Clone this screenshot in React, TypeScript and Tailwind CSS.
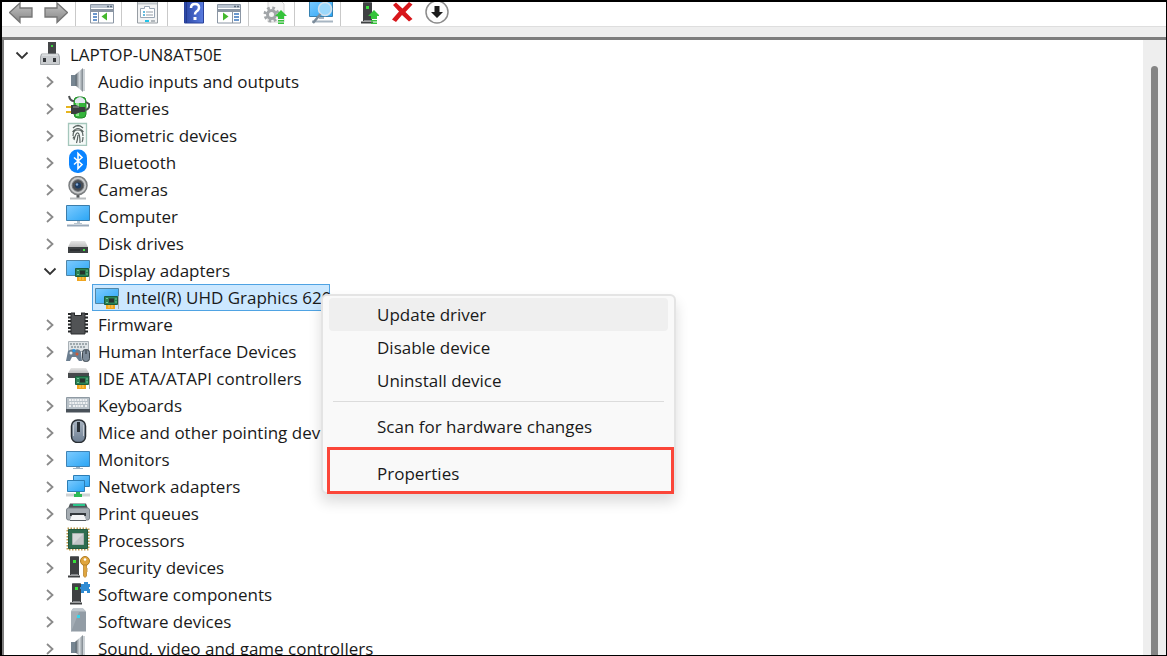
import { useState } from 'react';
import type { ReactNode } from 'react';

function Icon({ children }: { children: ReactNode }) {
  return (
    <svg width="24" height="24" viewBox="0 0 24 24" fill="none" className="shrink-0 self-start" aria-hidden="true">
      {children}
    </svg>
  );
}

function Defs() {
  return (
    <svg width="0" height="0" className="absolute" aria-hidden="true">
      <defs>
        <linearGradient id="screen" x1="0" y1="0" x2="1" y2="1">
          <stop offset="0" stopColor="#7dcbff" />
          <stop offset="1" stopColor="#2aa5f5" />
        </linearGradient>
        <linearGradient id="metal" x1="0" y1="0" x2="1" y2="0">
          <stop offset="0" stopColor="#6f777e" />
          <stop offset="0.5" stopColor="#d3d9dd" />
          <stop offset="1" stopColor="#7d858c" />
        </linearGradient>
        <linearGradient id="arrow" x1="0" y1="0" x2="0" y2="1">
          <stop offset="0" stopColor="#c4c4c4" />
          <stop offset="1" stopColor="#858585" />
        </linearGradient>
        <linearGradient id="mouse" x1="0" y1="0" x2="0" y2="1">
          <stop offset="0" stopColor="#a9b4c1" />
          <stop offset="1" stopColor="#6e7f93" />
        </linearGradient>
        <linearGradient id="help" x1="0" y1="0" x2="1" y2="0">
          <stop offset="0" stopColor="#2b46a5" />
          <stop offset="1" stopColor="#5a7de0" />
        </linearGradient>
        <linearGradient id="disk" x1="0" y1="0" x2="0" y2="1">
          <stop offset="0" stopColor="#e6e6e6" />
          <stop offset="1" stopColor="#bdbdbd" />
        </linearGradient>
      </defs>
    </svg>
  );
}

function Card() {
  return (
    <>
      <path d="M23.5 11v13" stroke="#a9adb0" />
      <path d="M9.5 11.5h13v8h-13z" fill="#2c8155" stroke="#1c5e3c" />
      <path d="M14 13.5h5v4h-5z" fill="#27332d" />
      <path d="M11 13.5h2M11 17.5h2M20 14h2M20 17h2" stroke="#6fc596" />
      <path d="M11 20h9v4h-9z" fill="#f0a51e" />
      <path d="M14 20v3M17 20v3" stroke="#fbd36f" />
    </>
  );
}

function Tower({ x = 0 }: { x?: number }) {
  return (
    <g transform={`translate(${x} 0)`}>
      <path d="M4 3l1-1h7l1 1v18H4z" fill="#3f4143" />
      <path d="M4 3l1-1h7l1 1z" fill="#6a6d70" />
      <path d="M2 22.500h12" stroke="#3f4143" strokeWidth="2" />
      <path d="M5 20.500h7" stroke="#85888b" />
      <path d="M7 6h3v3H7z" fill="#37e23b" />
    </g>
  );
}

const icons: Record<string, ReactNode> = {
  laptop: (
    <>
      <path d="M10 1h8v12h-8z" fill="#444648" />
      <path d="M13 4h2v2h-2z" fill="#3bd43f" />
      <path d="M3.500 13h17l1 3v7.500h-19V16z" fill="#c9cccf" stroke="#a3a7aa" />
      <path d="M5 17h3v4H5zM15 17h3v4h-3z" fill="#35383b" />
      <path d="M4 14h16" stroke="#eceeef" />
    </>
  ),
  speaker: (
    <>
      <path d="M5 7h5v11H5z" fill="#768591" />
      <path d="M10 6l7-6v24l-7-6z" fill="url(#metal)" />
      <path d="M10 6v12" stroke="#5e6a73" />
      <path d="M18 1v22" stroke="#9ba6ae" />
    </>
  ),
  battery: (
    <>
      <rect x="8" y="2" width="12" height="21" rx="4" fill="#35b53c" stroke="#238929" />
      <path d="M9 5q5-6 10 0v3H9z" fill="#e4e6f2" />
      <path d="M10 8h3v13h-3z" fill="#8ee58d" />
      <path d="M3 1q1 5 5 5M19 15q5-1 4-6l-3-2" stroke="#4b4f50" strokeWidth="2" />
      <path d="M0 12h6M0 17h6" stroke="#e6b520" strokeWidth="2" />
      <path d="M5 10h5l4 2h5v5h-4l-5 2H5z" fill="#393d3e" />
      <path d="M7 12h6" stroke="#959b9b" />
    </>
  ),
  fingerprint: (
    <>
      <path d="M2.500 1.500h18v22h-18z" fill="#f5faf8" stroke="#a5c7bc" strokeWidth="1.300" />
      <path d="M7 6q5-5 10 0M6.500 10q5.500-7 11 0M7 14q0-6 5-6t5 6M8 18q2-8 4-7t2 10M10.500 21q1-3 1.500-8M7 16.500l1-2M16 20q1-2 1-5M10 4h4" stroke="#57615f" strokeWidth="1.200" />
    </>
  ),
  bluetooth: (
    <>
      <rect x="3" y="0.500" width="18" height="23.500" rx="8.500" fill="#0a84ff" />
      <path d="M8 8.500l8 7-4 4V4.500l4 4-8 7" stroke="#fff" strokeWidth="1.600" />
    </>
  ),
  camera: (
    <>
      <path d="M10.500 17h3v5h-3z" fill="#55585a" />
      <path d="M4 22.500h16" stroke="#b9bcbe" strokeWidth="2" />
      <circle cx="12" cy="9.500" r="9" fill="#c8cacb" stroke="#7c7f81" strokeWidth="1.500" />
      <circle cx="12" cy="9.500" r="5.800" fill="#4a4e53" stroke="#6d7175" />
      <circle cx="12" cy="9.500" r="3" fill="#1d3c62" />
      <circle cx="11" cy="8.500" r="1.200" fill="#86acd8" />
    </>
  ),
  computer: (
    <>
      <path d="M0.500 2.500h23v15h-23z" fill="url(#screen)" stroke="#3b7dab" />
      <path d="M11 18h3v2h2v1H8v-1h3z" fill="#b8c5cf" />
      <path d="M1 22.500h22" stroke="#9aaabb" strokeWidth="2" />
    </>
  ),
  disk: (
    <>
      <path d="M5 11h14l3 6H2z" fill="url(#disk)" />
      <path d="M2 17h20v6H2z" fill="#3d4042" />
      <path d="M4 20h10" stroke="#1d1f20" />
      <path d="M17 19h2v2h-2z" fill="#42e044" />
    </>
  ),
  display: (
    <>
      <path d="M0.500 3.500h23v15h-23z" fill="url(#screen)" stroke="#5086a8" />
      <Card />
    </>
  ),
  firmware: (
    <>
      <path d="M5 2h14v21H5z" fill="#515355" stroke="#2d2f30" />
      <path d="M9 1h6v3H9z" fill="#fff" />
      <path d="M8.500 2v2.500h7V2" stroke="#252728" />
      <path d="M3.500 2v21M20.500 2v21" stroke="#252728" strokeWidth="3" strokeDasharray="2 1.500" />
    </>
  ),
  hid: (
    <>
      <path d="M2.500 3.500h20v10h-20z" fill="#dfe4e7" stroke="#a8b0b6" />
      <path d="M4 6h17M5 9h15" stroke="#8b959c" strokeWidth="1.500" strokeDasharray="2 1" />
      <path d="M2 13q4-3 7-1 4-2 6 2l1 9h-3l-3-4H6l-2 4H0z" fill="#6b7e90" />
      <circle cx="5" cy="15" r="1.500" fill="#e9edf0" />
      <circle cx="8" cy="12.500" r="1.500" fill="#2196e8" />
      <circle cx="11" cy="16" r="1.500" fill="#d05a38" />
      <rect x="16.500" y="11.500" width="7" height="12" rx="3" fill="#7d8b99" stroke="#3f4850" />
      <path d="M20 12v4" stroke="#2b3238" />
    </>
  ),
  ide: (
    <>
      <path d="M5 3h15l3 5H2z" fill="url(#disk)" />
      <path d="M2 8h21v5H2z" fill="#46494b" />
      <Card />
    </>
  ),
  keyboard: (
    <>
      <path d="M0.500 5.500h23v12h-23z" fill="#b8c1c8" stroke="#8f9aa3" />
      <path d="M3 8h18M3.500 11h18M3 14h2M7 14h10M19 14h2" stroke="#fff" strokeWidth="1.500" strokeDasharray="2 0.700" />
      <path d="M0 17h24v3.500H0z" fill="#495159" />
    </>
  ),
  mouse: (
    <>
      <rect x="5.500" y="1" width="14" height="22.500" rx="6" fill="url(#mouse)" stroke="#292e33" strokeWidth="1.500" />
      <path d="M7.500 6v11M17.500 6v11" stroke="#c5ccd4" />
      <path d="M12.500 3v10" stroke="#2a3036" strokeWidth="3" />
    </>
  ),
  monitor: (
    <>
      <path d="M0.500 5.500h23v15h-23z" fill="url(#screen)" stroke="#3f83b5" />
      <path d="M10 21h4v1h3v1H7v-1h3z" fill="#9fb2c1" />
    </>
  ),
  network: (
    <>
      <path d="M7.500 2.500h16v11h-16z" fill="url(#screen)" stroke="#2b7db5" />
      <path d="M1.500 7.500h17v11h-17z" fill="url(#screen)" stroke="#2b7db5" />
      <path d="M0 22h24" stroke="#cfd3d5" strokeWidth="3" />
      <path d="M10 19h4v2h2v3H8v-3h2z" fill="#2fba55" />
    </>
  ),
  printer: (
    <>
      <path d="M4 3.500h16l2 5H2z" fill="#4d5558" />
      <path d="M7 5h12" stroke="#2ac48a" strokeWidth="2" />
      <rect x="0.500" y="8" width="23" height="12" rx="2" fill="#a5acb2" stroke="#7c848a" />
      <path d="M4 13h16v3H4z" fill="#33383c" />
      <path d="M6 15h12l2 5H4z" fill="#f3f4f5" />
      <path d="M4 20.500h16" stroke="#565c61" />
    </>
  ),
  processor: (
    <>
      <path d="M1.500 1.500h21v21h-21z" stroke="#bd9a4c" strokeWidth="2" strokeDasharray="1.500 1.500" />
      <path d="M2.500 2.500h19v19h-19z" fill="#2f6d50" stroke="#235940" />
      <path d="M6.500 6.500h11v11h-11z" fill="#d6d8d9" stroke="#a9b2ae" />
      <path d="M7 17L17 7v10z" fill="#c2c5c7" />
    </>
  ),
  security: (
    <>
      <Tower />
      <circle cx="19" cy="7" r="4.500" fill="#e0a63f" stroke="#b27d22" />
      <circle cx="19" cy="5.500" r="1.300" fill="#fff" />
      <path d="M17.500 11h3v3l1 1-1 1 1 1-1 1v4l-1.500 1.500-1.500-1.500z" fill="#e0a63f" stroke="#b27d22" strokeWidth="0.700" />
    </>
  ),
  component: (
    <>
      <Tower x={2} />
      <path d="M15 3h3V1h4v2h2v3h-1v2h1v4h-3v-2h-3v2h-3V8h-1V6h1z" fill="#2f8bd3" />
    </>
  ),
  softdevice: (
    <>
      <path d="M7 0.500h10l3 3v20H5v-20z" fill="#929ca5" />
      <path d="M7 0.500h10l3 3H5z" fill="#c0c7cd" />
      <path d="M5 24V4h8z" fill="#a4adb5" />
      <path d="M11 7h3v3h-3z" fill="#35d5ec" />
    </>
  ),
};

const upArrow = <path d="M18 10l6 6h-3v3h-6v-3h-3zM15 20h6v1.500h-6zM15 22.500h6V24h-6z" fill="#35c33b" />;

const windowFrame = (
  <>
    <path d="M0.500 4.500h23v18.500h-23z" fill="#fff" stroke="#8b96a4" />
    <path d="M1 5h22v3H1z" fill="#b9c3d0" />
    <path d="M17 6.500h2M20 6.500h2" stroke="#5c6b7c" strokeWidth="1.500" />
    <path d="M1 10.500h22" stroke="#8b96a4" strokeWidth="3" />
  </>
);

const toolbarGroups: { label: string; art: ReactNode }[][] = [
  [
    { label: 'Back', art: <path d="M0.500 12.500L11 3v5h12v9H11v5.500z" fill="url(#arrow)" stroke="#757575" strokeWidth="1.300" /> },
    { label: 'Forward', art: <path d="M23.500 12.500L13 3v5H1v9h12v5.500z" fill="url(#arrow)" stroke="#757575" strokeWidth="1.300" /> },
  ],
  [
    {
      label: 'Show/Hide Console Tree',
      art: (
        <>
          {windowFrame}
          <path d="M8.500 12v11" stroke="#8b96a4" />
          <path d="M3 14h4M3 17h4M3 20h4" stroke="#3a76bd" strokeWidth="1.500" />
          <path d="M17 12.500v8L11.500 16.500z" fill="#43b82d" />
        </>
      ),
    },
  ],
  [
    {
      label: 'Properties',
      art: (
        <>
          <path d="M1.500 0.500h20v22.500h-20z" fill="#f2f3f4" stroke="#979da3" />
          <path d="M4.500 8.500h4v-2h5v2h5v9h-14z" fill="#fff" stroke="#9aa7b5" />
          <path d="M2 3.500h19" stroke="#c1c6cb" strokeWidth="2" />
          <path d="M7 12h2M7 15h2" stroke="#35a5d5" strokeWidth="1.500" />
          <path d="M10 12h7M10 15h7" stroke="#929ba5" />
          <path d="M9 20h4v2H9z" fill="#21c4e9" />
          <path d="M15 20h4v2h-4z" fill="#b2b8bd" />
        </>
      ),
    },
  ],
  [
    {
      label: 'Help',
      art: (
        <>
          <path d="M2.500 0.500h19v22.500h-19z" fill="url(#help)" stroke="#2a429b" />
          <path d="M4.500 1v22" stroke="#233a90" />
          <path d="M9 8q0-4 4-4t4 3.500q0 2.500-2.500 4-1.500 1-1.500 3" stroke="#fff" strokeWidth="2.500" />
          <path d="M11.500 17h3v3h-3z" fill="#fff" />
        </>
      ),
    },
    {
      label: 'Show/Hide Action Pane',
      art: (
        <>
          {windowFrame}
          <path d="M15.500 12v11" stroke="#8b96a4" />
          <path d="M17 14h5M17 17h5M17 20h5" stroke="#3a76bd" strokeWidth="1.500" />
          <path d="M6 12.500v8l5.500-4z" fill="#43b82d" />
        </>
      ),
    },
  ],
  [
    {
      label: 'Update device drivers',
      art: (
        <>
          <path d="M5 0h12l4 4v18H5z" fill="#f5f5f5" stroke="#d2d2d2" />
          <circle cx="8.500" cy="14.500" r="6.500" stroke="#a1a5a8" strokeWidth="3" strokeDasharray="2.600 2.500" />
          <circle cx="8.500" cy="14.500" r="4" fill="#f5f5f5" stroke="#a1a5a8" strokeWidth="3" />
          {upArrow}
        </>
      ),
    },
  ],
  [
    {
      label: 'Scan for hardware changes',
      art: (
        <>
          <path d="M0.500 0.500h23v16h-23z" fill="url(#screen)" stroke="#3681b1" />
          <path d="M10 18h5M3 21.500h21" stroke="#a7b5c2" strokeWidth="2" />
          <circle cx="16" cy="9" r="6.500" fill="#9bd8fb" stroke="#d3e2ed" strokeWidth="1.500" />
          <path d="M11.500 14L4 23" stroke="#7b8b99" strokeWidth="2.500" />
        </>
      ),
    },
  ],
  [
    {
      label: 'Add drivers',
      art: (
        <>
          <Tower x={4} />
          <g transform="translate(1 0)">{upArrow}</g>
        </>
      ),
    },
    {
      label: 'Uninstall device',
      art: <path d="M3 5l3-2.500 6.500 6L19 2l3.500 2.500-7 7.500 7 7-3.500 2.500-7-6.500-6 7-4-2.500 7-8z" fill="#d8161b" />,
    },
    {
      label: 'Disable device',
      art: (
        <>
          <circle cx="12" cy="12" r="11" fill="#fdfdfd" stroke="#8c8c8c" strokeWidth="1.500" />
          <path d="M9.500 6h5v6H18l-6 6-6-6h3.500z" fill="#1b1b1b" />
        </>
      ),
    },
  ],
];

const categories = [
  { name: 'Audio inputs and outputs', icon: 'speaker' },
  { name: 'Batteries', icon: 'battery' },
  { name: 'Biometric devices', icon: 'fingerprint' },
  { name: 'Bluetooth', icon: 'bluetooth' },
  { name: 'Cameras', icon: 'camera' },
  { name: 'Computer', icon: 'computer' },
  { name: 'Disk drives', icon: 'disk' },
  { name: 'Display adapters', icon: 'display', device: 'Intel(R) UHD Graphics 620' },
  { name: 'Firmware', icon: 'firmware' },
  { name: 'Human Interface Devices', icon: 'hid' },
  { name: 'IDE ATA/ATAPI controllers', icon: 'ide' },
  { name: 'Keyboards', icon: 'keyboard' },
  { name: 'Mice and other pointing devices', icon: 'mouse' },
  { name: 'Monitors', icon: 'monitor' },
  { name: 'Network adapters', icon: 'network' },
  { name: 'Print queues', icon: 'printer' },
  { name: 'Processors', icon: 'processor' },
  { name: 'Security devices', icon: 'security' },
  { name: 'Software components', icon: 'component' },
  { name: 'Software devices', icon: 'softdevice' },
  { name: 'Sound, video and game controllers', icon: 'speaker' },
];

function Toggle({ label, open, onClick }: { label: string; open: boolean; onClick?: () => void }) {
  return (
    <button type="button" aria-label={label} aria-expanded={open} onClick={onClick} className="mr-1 flex size-6 shrink-0 items-center justify-center">
      <svg width="14" height="14" viewBox="0 0 14 14" fill="none" strokeWidth="1.800">
        {open ? <path d="M1.500 4.500L7 10l5.500-5.500" stroke="#333" /> : <path d="M4 2l5.500 5L4 12" stroke="#8a8a8a" />}
      </svg>
    </button>
  );
}

function MenuItem({ label, active }: { label: string; active?: boolean }) {
  return (
    <button
      type="button"
      role="menuitem"
      className={`flex h-[33px] w-full items-center rounded pl-12 text-left hover:bg-[#efefef] ${active ? 'bg-[#efefef]' : ''}`}
    >
      {label}
    </button>
  );
}

function ContextMenu() {
  return (
    <div role="menu" className="absolute top-[9px] left-[228px] z-10 w-[355px] rounded-md border-2 border-[#e4e4e4] bg-[#f9f9f9] px-1.5 py-0.5 shadow-[0_8px_14px_rgba(0,0,0,0.14)]">
      <MenuItem label="Update driver" active />
      <MenuItem label="Disable device" />
      <MenuItem label="Uninstall device" />
      <hr className="mx-1 mt-1 mb-2 border-[#dcdcdc]" />
      <MenuItem label="Scan for hardware changes" />
      <div className="relative pt-3.5">
        <MenuItem label="Properties" />
        <div className="pointer-events-none absolute top-1 -right-1.5 -bottom-1 -left-0.5 border-3 border-[#fb4639]" />
      </div>
    </div>
  );
}

export default function App() {
  const [open, setOpen] = useState<Record<string, boolean>>({ 'Display adapters': true });

  return (
    <div className="flex h-screen flex-col overflow-hidden border-t-2 border-r border-b border-l-2 border-black bg-[#eeeeee] font-['Open_Sans','Noto_Sans',sans-serif] text-[17px] text-[#1a1a1a]">
      <Defs />
      <div role="toolbar" aria-label="Device Manager" className="flex h-[25px] shrink-0 border-b border-[#dedede] bg-white">
        {toolbarGroups.map((group, i) => (
          <div key={i} className="flex gap-[11px] border-r border-[#c9c9c9] pr-[7px] pl-3.5 first:pl-[7px] last:border-r-0">
            {group.map(item => (
              <button key={item.label} type="button" aria-label={item.label} className="self-start">
                <svg width="24" height="22" viewBox="0 2 24 22" fill="none" className="block">{item.art}</svg>
              </button>
            ))}
          </div>
        ))}
      </div>

      <div className="mt-2.5 flex min-h-0 flex-1 border-t-3 border-l-2 border-[#7d7d7d]">
        <main className="min-w-0 flex-1 overflow-hidden bg-white pt-px">
          <div className="flex h-[27px] items-center pl-1.5">
            <Toggle label="LAPTOP-UN8AT50E" open />
            <Icon>{icons.laptop}</Icon>
            <span className="ml-2">LAPTOP-UN8AT50E</span>
          </div>
          <ul className="pl-[34px]">
            {categories.map(cat => (
              <li key={cat.name}>
                <div className="flex h-[27px] items-center whitespace-nowrap">
                  <Toggle
                    label={cat.name}
                    open={!!open[cat.name]}
                    onClick={() => setOpen({ ...open, [cat.name]: !open[cat.name] })}
                  />
                  <Icon>{icons[cat.icon]}</Icon>
                  <span className="ml-2">{cat.name}</span>
                </div>
                {cat.device && open[cat.name] && (
                  <div className="relative ml-[54px] flex h-[27px] w-[238px] items-center border border-[#4fa3e3] bg-[#cce8ff] pl-0.5 whitespace-nowrap">
                    <Icon>{icons.display}</Icon>
                    <span className="ml-[7px]">{cat.device}</span>
                    <ContextMenu />
                  </div>
                )}
              </li>
            ))}
          </ul>
        </main>
        <div className="flex w-[23px] shrink-0 justify-center pt-[26px]">
          <div className="w-[7px] rounded-t-full bg-[#858585]" />
        </div>
      </div>
    </div>
  );
}
